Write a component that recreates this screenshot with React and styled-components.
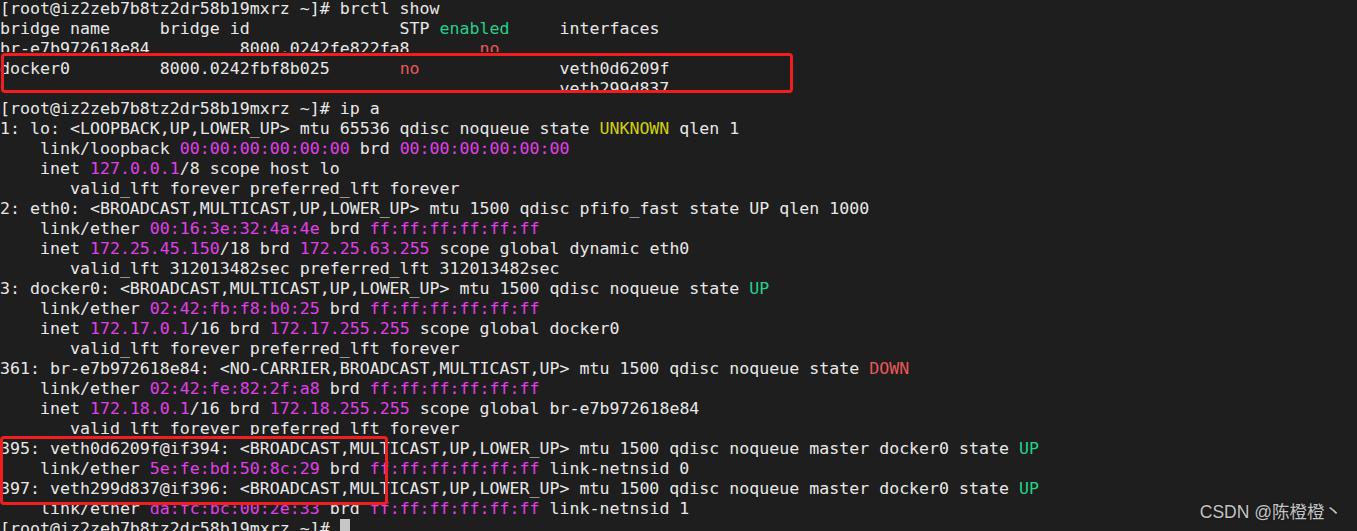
import React from 'react';
import styled, {createGlobalStyle} from 'styled-components';

const GlobalStyle = createGlobalStyle`
  html, body {
    margin: 0;
    padding: 0;
    background: #1e1e1e;
  }
`;

const TONES = {
  mag: '#e040e8',
  yel: '#d0d00c',
  grn: '#23d18b',
  red: '#ea5858',
};

const Screen = styled.div`
  position: relative;
  width: 1357px;
  height: 531px;
  overflow: hidden;
  background: #1e1e1e;
`;

const Terminal = styled.div`
  display: flex;
  flex-direction: column;
  margin-top: -1px;
  font-family: "DejaVu Sans Mono", "Liberation Mono", monospace;
  font-size: 16.6px;
  line-height: 20px;
  color: #e8e8e8;
  white-space: pre;
`;

const Line = styled.div`
  height: ${p => (p.$cut ? `${p.$cut}px` : '20px')};
  margin-bottom: ${p => (p.$cut ? `${20 - p.$cut}px` : '0')};
  overflow: hidden;
`;

const Seg = styled.span`
  color: ${p => TONES[p.$tone] || 'inherit'};
`;

const Cursor = styled.span`
  display: inline-block;
  width: 10px;
  height: 20px;
  vertical-align: top;
  background: #c6c6c6;
`;

const Mark = styled.div`
  position: absolute;
  left: ${p => p.$x}px;
  top: ${p => p.$y}px;
  width: ${p => p.$w}px;
  height: ${p => p.$h}px;
  box-sizing: border-box;
  border: 3px solid #f01e1e;
  border-radius: 4px;
`;

const Watermark = styled.div`
  position: absolute;
  right: 15px;
  bottom: 8px;
  font-family: "Liberation Sans", "Noto Sans CJK SC", sans-serif;
  font-size: 17.5px;
  color: #c4c4c4;
  text-shadow: 0 0 2px rgba(0, 0, 0, 0.6);
`;

const link = (mac, tail = '') => [
  ['    link/ether '],
  [mac, 'mag'],
  [' brd '],
  ['ff:ff:ff:ff:ff:ff', 'mag'],
  ...(tail ? [[tail]] : []),
];

const valid = [['       valid_lft forever preferred_lft forever']];

const LINES = [
  {segs: [['[root@iz2zeb7b8tz2dr58b19mxrz ~]# brctl show']]},
  {segs: [['bridge name     bridge id               STP '], ['enabled', 'grn'], ['     interfaces']]},
  {cut: 13, segs: [['br-e7b972618e84         8000.0242fe822fa8       '], ['no', 'red']]},
  {segs: [['docker0         8000.0242fbf8b025       '], ['no', 'red'], ['              veth0d6209f']]},
  {cut: 12, segs: [[' '.repeat(56) + 'veth299d837']]},
  {segs: [['[root@iz2zeb7b8tz2dr58b19mxrz ~]# ip a']]},
  {segs: [['1: lo: <LOOPBACK,UP,LOWER_UP> mtu 65536 qdisc noqueue state '], ['UNKNOWN', 'yel'], [' qlen 1']]},
  {segs: [['    link/loopback '], ['00:00:00:00:00:00', 'mag'], [' brd '], ['00:00:00:00:00:00', 'mag']]},
  {segs: [['    inet '], ['127.0.0.1', 'mag'], ['/8 scope host lo']]},
  {segs: valid},
  {segs: [['2: eth0: <BROADCAST,MULTICAST,UP,LOWER_UP> mtu 1500 qdisc pfifo_fast state UP qlen 1000']]},
  {segs: link('00:16:3e:32:4a:4e')},
  {segs: [['    inet '], ['172.25.45.150', 'mag'], ['/18 brd '], ['172.25.63.255', 'mag'], [' scope global dynamic eth0']]},
  {segs: [['       valid_lft 312013482sec preferred_lft 312013482sec']]},
  {segs: [['3: docker0: <BROADCAST,MULTICAST,UP,LOWER_UP> mtu 1500 qdisc noqueue state '], ['UP', 'grn']]},
  {segs: link('02:42:fb:f8:b0:25')},
  {segs: [['    inet '], ['172.17.0.1', 'mag'], ['/16 brd '], ['172.17.255.255', 'mag'], [' scope global docker0']]},
  {segs: valid},
  {segs: [['361: br-e7b972618e84: <NO-CARRIER,BROADCAST,MULTICAST,UP> mtu 1500 qdisc noqueue state '], ['DOWN', 'red']]},
  {segs: link('02:42:fe:82:2f:a8')},
  {segs: [['    inet '], ['172.18.0.1', 'mag'], ['/16 brd '], ['172.18.255.255', 'mag'], [' scope global br-e7b972618e84']]},
  {cut: 16, segs: valid},
  {segs: [['395: veth0d6209f@if394: <BROADCAST,MULTICAST,UP,LOWER_UP> mtu 1500 qdisc noqueue master docker0 state '], ['UP', 'grn']]},
  {segs: link('5e:fe:bd:50:8c:29', ' link-netnsid 0')},
  {segs: [['397: veth299d837@if396: <BROADCAST,MULTICAST,UP,LOWER_UP> mtu 1500 qdisc noqueue master docker0 state '], ['UP', 'grn']]},
  {segs: link('da:fc:bc:00:2e:33', ' link-netnsid 1')},
  {segs: [['[root@iz2zeb7b8tz2dr58b19mxrz ~]# ']], cursor: true},
];

const App = () => {
  return (
    <Screen>
      <GlobalStyle/>
      <Terminal>
        {LINES.map((line, i) => (
          <Line key={i} $cut={line.cut}>
            {line.segs.map(([text, tone], j) => (
              <Seg key={j} $tone={tone}>{text}</Seg>
            ))}
            {line.cursor && <Cursor/>}
          </Line>
        ))}
      </Terminal>
      <Mark $x={1} $y={53} $w={792} $h={40}/>
      <Mark $x={0} $y={436} $w={388} $h={69}/>
      <Watermark>CSDN @陈橙橙丶</Watermark>
    </Screen>
  );
};

export default App;
